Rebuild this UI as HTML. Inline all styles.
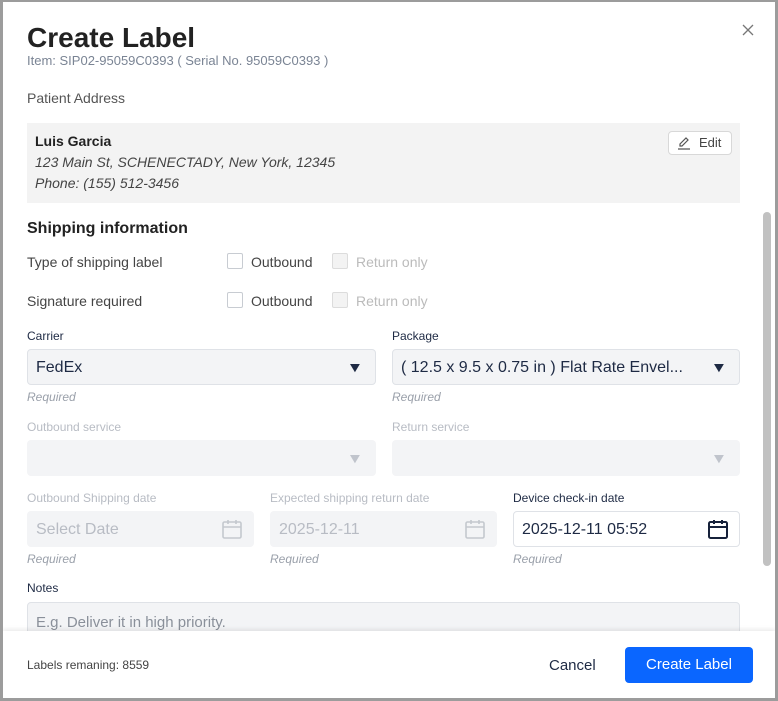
<!DOCTYPE html>
<html><head><style>
*{box-sizing:border-box;margin:0;padding:0}
body{width:778px;height:701px;background:#9c9c9c;font-family:"Liberation Sans",sans-serif;position:relative;overflow:hidden}
.m{position:absolute;left:3px;top:2px;width:772px;height:696px;background:#fff;overflow:hidden}
.a{position:absolute;white-space:nowrap}
.lbl{font-size:12px;color:#1e2a44}
.dis{color:#b8bcc4}
.req{font-size:12px;font-style:italic;color:#9aa0aa}
.box{position:absolute;height:36px;border:1px solid #dfe2e7;border-radius:4px;background:#f3f4f6}
.cb{position:absolute;width:16px;height:16px;border:1px solid #c8ccd2;border-radius:2px;background:#fff}
.cb.d{background:#f3f3f3;border-color:#dcdcdc}
.t14{font-size:14px;color:#333}
.arr{position:absolute;font-size:14px;transform:scaleX(1.2)}
</style></head><body>
<div class="m">
<div class="a" style="left:24px;top:20px;font-size:28px;font-weight:bold;color:#222">Create Label</div>
<div class="a" style="left:24px;top:51px;font-size:13px;color:#7a8494">Item: SIP02-95059C0393 ( Serial No. 95059C0393 )</div>
<svg class="a" style="left:739px;top:22px" width="12" height="12" viewBox="0 0 12 12"><path d="M1 1L11 11M11 1L1 11" stroke="#777" stroke-width="1.3"/></svg>
<div class="a" style="left:24px;top:88px;font-size:14px;color:#555">Patient Address</div>
<div class="a" style="left:24px;top:121px;width:713px;height:80px;background:#f3f3f3"></div>
<div class="a" style="left:32px;top:131px;font-size:14px;font-weight:bold;color:#222">Luis Garcia</div>
<div class="a" style="left:32px;top:152px;font-size:14px;font-style:italic;color:#444">123 Main St, SCHENECTADY, New York, 12345</div>
<div class="a" style="left:32px;top:173px;font-size:14px;font-style:italic;color:#444">Phone: (155) 512-3456</div>
<div class="a" style="left:665px;top:129px;width:64px;height:24px;border:1px solid #d8d8d8;border-radius:4px;background:#fff;font-size:13px;color:#444;padding:3px 0 0 30px">Edit
<svg style="position:absolute;left:8px;top:4px" width="15" height="14" viewBox="0 0 15 14"><path d="M3 10 L3 8 L9 2 L11 4 L5 10 Z M1 13 H13" fill="none" stroke="#555" stroke-width="1.2"/></svg></div>
<div class="a" style="left:24px;top:218px;font-size:16px;font-weight:bold;color:#222">Shipping information</div>
<div class="a t14" style="left:24px;top:252px;color:#444">Type of shipping label</div>
<div class="cb" style="left:224px;top:251px"></div><div class="a t14" style="left:248px;top:252px;color:#444">Outbound</div>
<div class="cb d" style="left:329px;top:251px"></div><div class="a t14" style="left:353px;top:252px;color:#bbb">Return only</div>
<div class="a t14" style="left:24px;top:291px;color:#444">Signature required</div>
<div class="cb" style="left:224px;top:290px"></div><div class="a t14" style="left:248px;top:291px;color:#444">Outbound</div>
<div class="cb d" style="left:329px;top:290px"></div><div class="a t14" style="left:353px;top:291px;color:#bbb">Return only</div>

<div class="a lbl" style="left:24px;top:327px">Carrier</div>
<div class="box" style="left:24px;top:347px;width:349px"></div>
<div class="a" style="left:33px;top:357px;font-size:16px;color:#1e2a44">FedEx</div>
<div class="arr" style="left:345px;top:357px;color:#1e2a44">▼</div>
<div class="a req" style="left:24px;top:388px">Required</div>
<div class="a lbl" style="left:389px;top:327px">Package</div>
<div class="box" style="left:389px;top:347px;width:348px"></div>
<div class="a" style="left:398px;top:357px;font-size:16px;color:#1e2a44">( 12.5 x 9.5 x 0.75 in ) Flat Rate Envel...</div>
<div class="arr" style="left:709px;top:357px;color:#1e2a44">▼</div>
<div class="a req" style="left:389px;top:388px">Required</div>

<div class="a lbl dis" style="left:24px;top:418px">Outbound service</div>
<div class="box" style="left:24px;top:438px;width:349px;border:none"></div>
<div class="arr" style="left:345px;top:448px;color:#c0c4cc">▼</div>
<div class="a lbl dis" style="left:389px;top:418px">Return service</div>
<div class="box" style="left:389px;top:438px;width:348px;border:none"></div>
<div class="arr" style="left:709px;top:448px;color:#c0c4cc">▼</div>

<div class="a lbl dis" style="left:24px;top:489px">Outbound Shipping date</div>
<div class="box" style="left:24px;top:509px;width:227px;border:none"></div>
<div class="a" style="left:33px;top:519px;font-size:16px;color:#b8bcc4">Select Date</div>
<svg class="a" style="left:218px;top:516px" width="22" height="22" viewBox="0 0 22 22"><rect x="2" y="4" width="18" height="16" rx="1.5" fill="none" stroke="#c4c8ce" stroke-width="1.6"/><path d="M2 9H20M7 2V6M15 2V6" stroke="#c4c8ce" stroke-width="1.6"/></svg>
<div class="a req" style="left:24px;top:550px">Required</div>
<div class="a lbl dis" style="left:267px;top:489px">Expected shipping return date</div>
<div class="box" style="left:267px;top:509px;width:227px;border:none"></div>
<div class="a" style="left:276px;top:519px;font-size:16px;color:#b8bcc4">2025-12-11</div>
<svg class="a" style="left:461px;top:516px" width="22" height="22" viewBox="0 0 22 22"><rect x="2" y="4" width="18" height="16" rx="1.5" fill="none" stroke="#c4c8ce" stroke-width="1.6"/><path d="M2 9H20M7 2V6M15 2V6" stroke="#c4c8ce" stroke-width="1.6"/></svg>
<div class="a req" style="left:267px;top:550px">Required</div>
<div class="a lbl" style="left:510px;top:489px">Device check-in date</div>
<div class="box" style="left:510px;top:509px;width:227px;background:#fff"></div>
<div class="a" style="left:519px;top:519px;font-size:16px;color:#1e2a44">2025-12-11 05:52</div>
<svg class="a" style="left:704px;top:516px" width="22" height="22" viewBox="0 0 22 22"><rect x="2" y="4" width="18" height="16" rx="1.5" fill="none" stroke="#16213a" stroke-width="2"/><path d="M2 9H20M7 2V6M15 2V6" stroke="#16213a" stroke-width="2"/></svg>
<div class="a req" style="left:510px;top:550px">Required</div>

<div class="a lbl" style="left:24px;top:579px">Notes</div>
<div class="box" style="left:24px;top:600px;width:713px;height:50px"></div>
<div class="a" style="left:33px;top:612px;font-size:15px;color:#8a909a">E.g. Deliver it in high priority.</div>

<div class="a" style="left:760px;top:210px;width:8px;height:354px;border-radius:4px;background:#c1c1c1"></div>

<div class="a" style="left:0;top:629px;width:772px;height:67px;background:#fff;box-shadow:0 -2px 4px rgba(0,0,0,0.08)"></div>
<div class="a" style="left:24px;top:656px;font-size:12px;color:#444">Labels remaning: 8559</div>
<div class="a" style="left:546px;top:655px;font-size:15px;color:#1e2a44">Cancel</div>
<div class="a" style="left:622px;top:645px;width:128px;height:36px;border-radius:4px;background:#0a66ff;color:#fff;font-size:15px;text-align:center;line-height:36px">Create Label</div>
</div>
</body></html>
